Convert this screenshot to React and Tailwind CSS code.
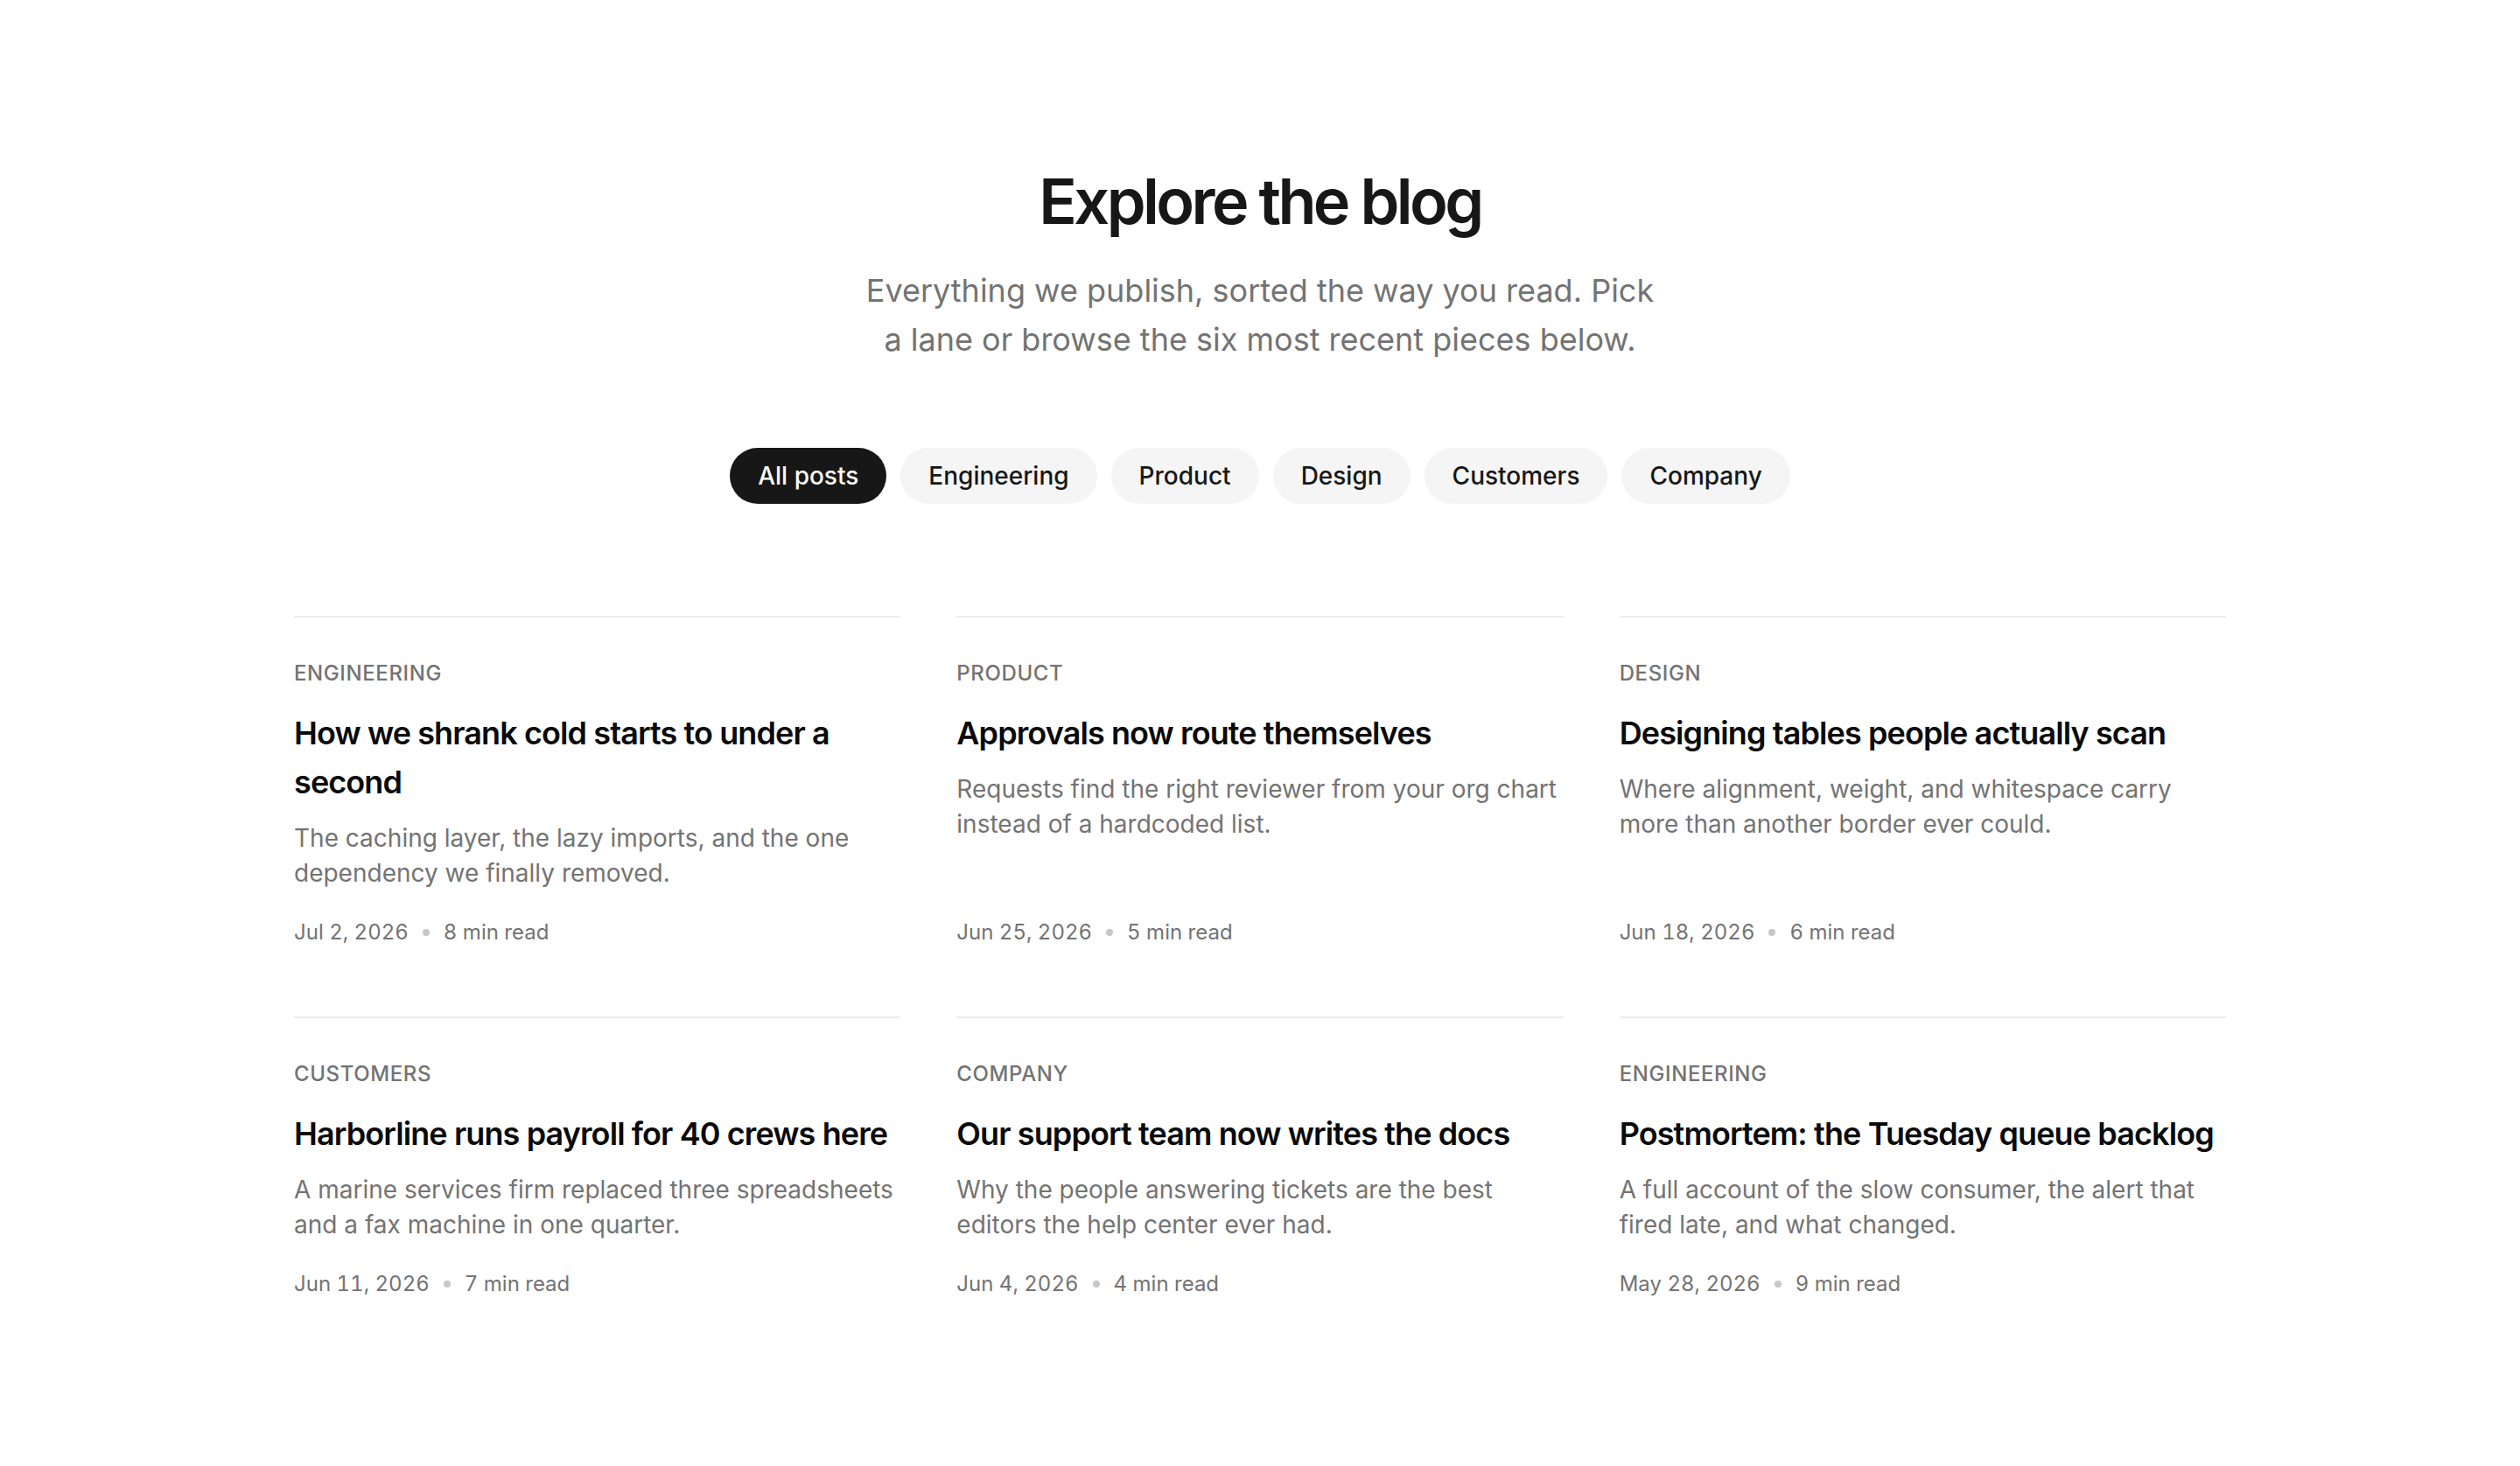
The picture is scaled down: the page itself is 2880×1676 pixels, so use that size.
import React, { useState } from 'react';

const CATEGORIES = ['All posts', 'Engineering', 'Product', 'Design', 'Customers', 'Company'];

const POSTS = [
  {
    category: 'Engineering',
    title: 'How we shrank cold starts to under a second',
    excerpt: 'The caching layer, the lazy imports, and the one dependency we finally removed.',
    date: 'Jul 2, 2026',
    readTime: '8 min read',
  },
  {
    category: 'Product',
    title: 'Approvals now route themselves',
    excerpt: 'Requests find the right reviewer from your org chart instead of a hardcoded list.',
    date: 'Jun 25, 2026',
    readTime: '5 min read',
  },
  {
    category: 'Design',
    title: 'Designing tables people actually scan',
    excerpt: 'Where alignment, weight, and whitespace carry more than another border ever could.',
    date: 'Jun 18, 2026',
    readTime: '6 min read',
  },
  {
    category: 'Customers',
    title: 'Harborline runs payroll for 40 crews here',
    excerpt: 'A marine services firm replaced three spreadsheets and a fax machine in one quarter.',
    date: 'Jun 11, 2026',
    readTime: '7 min read',
  },
  {
    category: 'Company',
    title: 'Our support team now writes the docs',
    excerpt: 'Why the people answering tickets are the best editors the help center ever had.',
    date: 'Jun 4, 2026',
    readTime: '4 min read',
  },
  {
    category: 'Engineering',
    title: 'Postmortem: the Tuesday queue backlog',
    excerpt: 'A full account of the slow consumer, the alert that fired late, and what changed.',
    date: 'May 28, 2026',
    readTime: '9 min read',
  },
];

const FilterPill = ({ label, active, onClick }) => (
  <button
    type="button"
    aria-pressed={active}
    onClick={onClick}
    className={`rounded-full px-8 py-3 text-[28px] leading-10 font-medium cursor-pointer transition-colors ${
      active ? 'bg-neutral-900 text-neutral-50' : 'bg-neutral-100 text-neutral-900 hover:bg-neutral-200'
    }`}
  >
    {label}
  </button>
);

const PostCard = ({ post }) => (
  <article className="flex flex-col border-t-2 border-[#ededed] pt-12">
    <p className="text-2xl font-medium uppercase tracking-wide text-neutral-500">{post.category}</p>
    <h2 className="mt-6 text-4xl leading-14 font-semibold tracking-tight text-neutral-950">
      <a href="#" className="hover:underline">{post.title}</a>
    </h2>
    <p className="mt-4 text-[28px] leading-10 text-neutral-500">{post.excerpt}</p>
    <div className="mt-auto flex items-center gap-4 pt-8 text-2xl tabular-nums text-neutral-500">
      <time>{post.date}</time>
      <span aria-hidden="true" className="size-2 rounded-full bg-[#c7c7c7]" />
      <span>{post.readTime}</span>
    </div>
  </article>
);

const App = () => {
  const [selected, setSelected] = useState('All posts');

  const posts = selected === 'All posts' ? POSTS : POSTS.filter((post) => post.category === selected);

  return (
    <main className="min-h-screen bg-white py-48 font-['Inter',sans-serif]">
      <div className="mx-auto max-w-[2304px] px-12">
        <header className="mx-auto flex max-w-[1344px] flex-col items-center text-center">
          <h1 className="text-7xl leading-19 font-semibold tracking-tighter text-neutral-900">Explore the blog</h1>
          <p className="mt-9 max-w-[1024px] text-4xl leading-14 text-balance text-neutral-500">
            Everything we publish, sorted the way you read. Pick a lane or browse the six most recent pieces below.
          </p>
        </header>

        <div role="group" aria-label="Filter posts" className="mt-24 flex flex-wrap justify-center gap-4">
          {CATEGORIES.map((category) => (
            <FilterPill
              key={category}
              label={category}
              active={category === selected}
              onClick={() => setSelected(category)}
            />
          ))}
        </div>

        <div className="mt-32 grid grid-cols-1 gap-x-16 gap-y-20 md:grid-cols-2 xl:grid-cols-3">
          {posts.map((post) => (
            <PostCard key={post.title} post={post} />
          ))}
        </div>
      </div>
    </main>
  );
};

export default App;
